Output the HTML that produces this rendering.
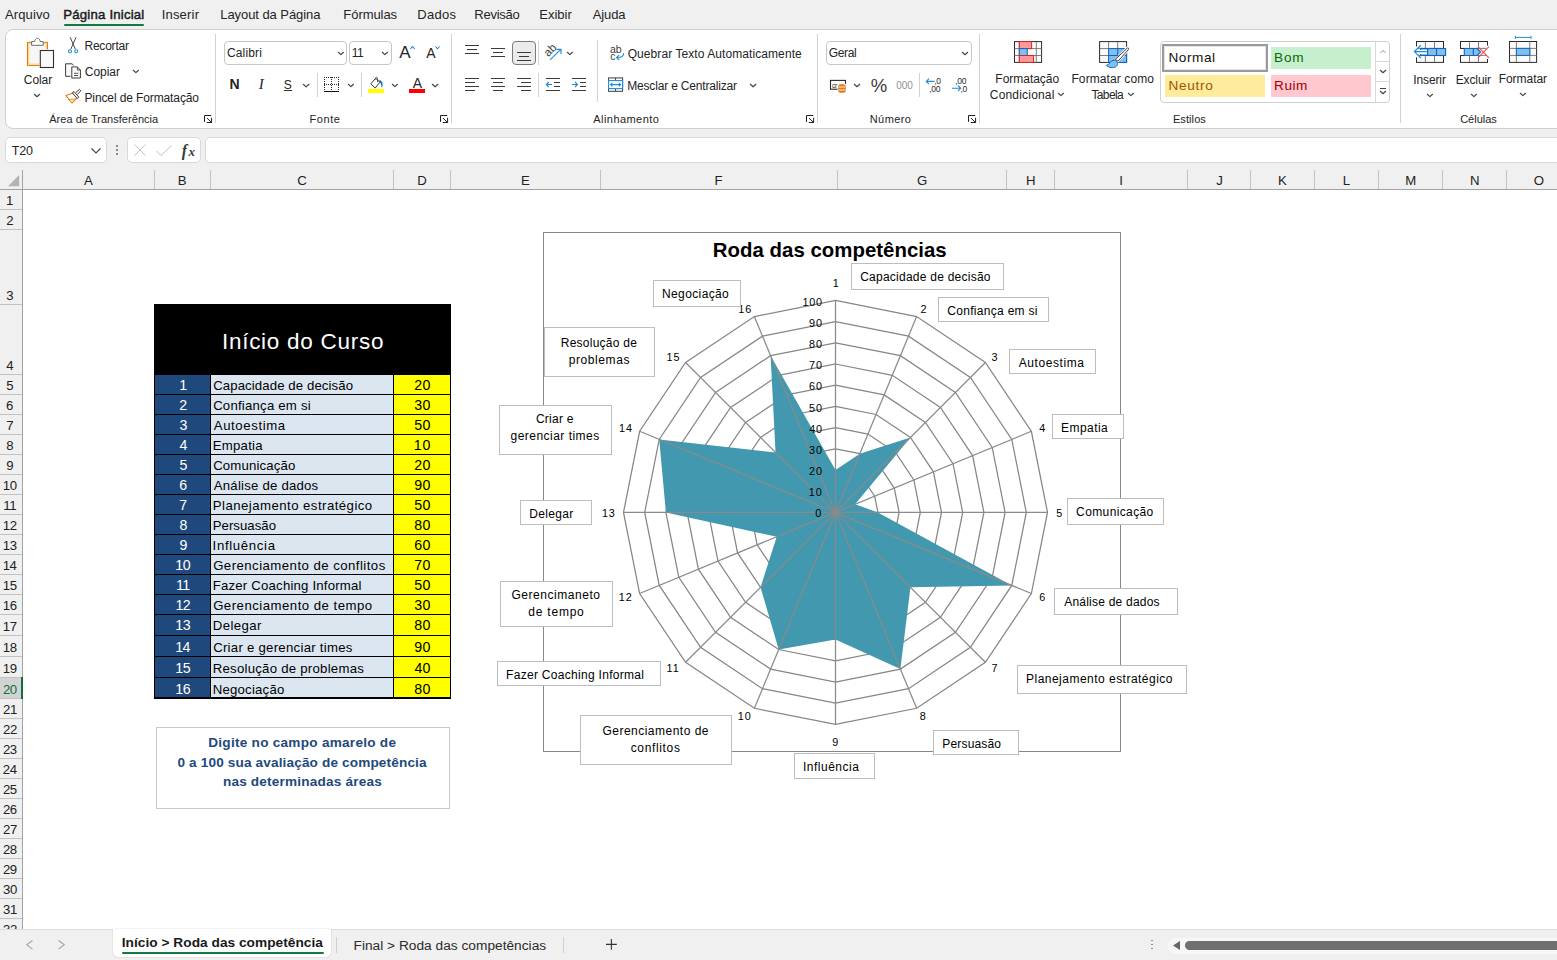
<!DOCTYPE html>
<html lang="pt-BR"><head><meta charset="utf-8"><title>Roda das competências</title>
<style>
html,body{margin:0;padding:0;}
body{width:1557px;height:960px;overflow:hidden;position:relative;background:#f0f0f0;font-family:"Liberation Sans",sans-serif;color:#242424;}
.b{position:absolute;display:block;}
.t{position:absolute;white-space:nowrap;display:block;}
svg{overflow:visible;}
</style></head><body>

<div id="tabs">
<span class="t" style="left:5.10px;top:6.00px;font-size:13px;line-height:17px;letter-spacing:0.092px;">Arquivo</span>
<span class="t" style="left:63.34px;top:6.00px;font-size:13.2px;line-height:17px;letter-spacing:0.190px;color:#1a1a1a;-webkit-text-stroke:0.45px #1a1a1a;">Página Inicial</span>
<div class="b" style="left:64.00px;top:24.00px;width:80.00px;height:2.00px;background:#107c41;border-radius:1px;"></div>
<span class="t" style="left:161.63px;top:6.00px;font-size:13px;line-height:17px;letter-spacing:0.210px;">Inserir</span>
<span class="t" style="left:220.26px;top:6.00px;font-size:13px;line-height:17px;letter-spacing:-0.064px;">Layout da Página</span>
<span class="t" style="left:343.36px;top:6.00px;font-size:13px;line-height:17px;letter-spacing:-0.069px;">Fórmulas</span>
<span class="t" style="left:417.36px;top:6.00px;font-size:13px;line-height:17px;letter-spacing:0.256px;">Dados</span>
<span class="t" style="left:474.36px;top:6.00px;font-size:13px;line-height:17px;letter-spacing:-0.250px;">Revisão</span>
<span class="t" style="left:539.26px;top:6.00px;font-size:13px;line-height:17px;letter-spacing:0.007px;">Exibir</span>
<span class="t" style="left:592.80px;top:6.00px;font-size:13px;line-height:17px;letter-spacing:-0.145px;">Ajuda</span>
</div>
<div class="b" style="left:5.00px;top:29.00px;width:1595.00px;height:100.00px;background:#ffffff;border:1px solid #d0d0d0;box-sizing:border-box;border-radius:8px;"></div>
<div class="b" style="left:215.00px;top:34.00px;width:1.00px;height:88.60px;background:#d2d2d2;"></div>
<div class="b" style="left:451.00px;top:34.00px;width:1.00px;height:88.60px;background:#d2d2d2;"></div>
<div class="b" style="left:817.00px;top:34.00px;width:1.00px;height:88.60px;background:#d2d2d2;"></div>
<div class="b" style="left:979.30px;top:34.00px;width:1.00px;height:88.60px;background:#d2d2d2;"></div>
<div class="b" style="left:1400.30px;top:34.00px;width:1.00px;height:88.60px;background:#d2d2d2;"></div>
<span class="t" style="left:23.80px;top:72.00px;font-size:12px;line-height:16px;letter-spacing:-0.075px;">Colar</span>
<svg class="b" style="left:34.00px;top:93.80px;" width="6.00" height="3.00" viewBox="0 0 6.00 3.00"><path d="M0.3 0.3 L3.00 2.70 L5.70 0.3" fill="none" stroke="#444" stroke-width="1.2" stroke-linecap="round" stroke-linejoin="round"/></svg>
<span class="t" style="left:84.44px;top:38.00px;font-size:12px;line-height:16px;letter-spacing:-0.211px;">Recortar</span>
<span class="t" style="left:84.80px;top:64.00px;font-size:12px;line-height:16px;letter-spacing:-0.032px;">Copiar</span>
<svg class="b" style="left:132.50px;top:70.05px;" width="5.80" height="2.90" viewBox="0 0 5.80 2.90"><path d="M0.3 0.3 L2.90 2.60 L5.50 0.3" fill="none" stroke="#444" stroke-width="1.2" stroke-linecap="round" stroke-linejoin="round"/></svg>
<span class="t" style="left:84.44px;top:90.00px;font-size:12px;line-height:16px;letter-spacing:-0.114px;">Pincel de Formatação</span>
<span class="t" style="left:49.20px;top:112.00px;font-size:11.0px;line-height:14px;letter-spacing:0.038px;">Área de Transferência</span>
<svg class="b" style="left:204.00px;top:115.00px;" width="8" height="8" viewBox="0 0 8 8"><path d="M0.5 6.5 V0.5 H6.8 M3.3 3.4 L7.5 7.4 M7.6 3.2 V7.5 H3.2" fill="none" stroke="#1f1f1f" stroke-width="1" stroke-linecap="round"/></svg>
<div class="b" style="left:224.00px;top:41.00px;width:122.50px;height:24.00px;background:#fff;border:1px solid #c6c6c6;box-sizing:border-box;border-radius:4px;"></div>
<span class="t" style="left:227.00px;top:45.00px;font-size:12px;line-height:16px;letter-spacing:0.132px;">Calibri</span>
<svg class="b" style="left:337.50px;top:52.05px;" width="5.80" height="2.90" viewBox="0 0 5.80 2.90"><path d="M0.3 0.3 L2.90 2.60 L5.50 0.3" fill="none" stroke="#444" stroke-width="1.2" stroke-linecap="round" stroke-linejoin="round"/></svg>
<div class="b" style="left:349.00px;top:41.00px;width:42.50px;height:24.00px;background:#fff;border:1px solid #c6c6c6;box-sizing:border-box;border-radius:4px;"></div>
<span class="t" style="left:351.70px;top:45.00px;font-size:12px;line-height:16px;letter-spacing:-0.580px;">11</span>
<svg class="b" style="left:382.20px;top:52.05px;" width="5.80" height="2.90" viewBox="0 0 5.80 2.90"><path d="M0.3 0.3 L2.90 2.60 L5.50 0.3" fill="none" stroke="#444" stroke-width="1.2" stroke-linecap="round" stroke-linejoin="round"/></svg>
<span class="t" style="left:399.20px;top:42.00px;font-size:17px;line-height:21px;">A</span>
<svg class="b" style="left:409.50px;top:45.50px;" width="5" height="3.2" viewBox="0 0 5 3.2"><path d="M0.4 2.8 L2.5 0.5 L4.6 2.8" fill="none" stroke="#2b7cd3" stroke-width="1.1"/></svg>
<span class="t" style="left:426.20px;top:44.00px;font-size:14px;line-height:18px;">A</span>
<svg class="b" style="left:435.20px;top:45.80px;" width="5" height="3.2" viewBox="0 0 5 3.2"><path d="M0.4 0.5 L2.5 2.8 L4.6 0.5" fill="none" stroke="#2b7cd3" stroke-width="1.1"/></svg>
<span class="t" style="left:229.49px;top:75.00px;font-size:14px;line-height:18px;font-weight:700;">N</span>
<span class="t" style="left:258.84px;top:75.00px;font-size:15px;line-height:19px;font-style:italic;font-family:'Liberation Serif',serif;">I</span>
<span class="t" style="left:283.86px;top:77.00px;font-size:12px;line-height:16px;">S</span>
<div class="b" style="left:284.00px;top:90.00px;width:8.00px;height:1.00px;background:#333;"></div>
<svg class="b" style="left:303.00px;top:84.02px;" width="6.30" height="3.15" viewBox="0 0 6.30 3.15"><path d="M0.3 0.3 L3.15 2.85 L6.00 0.3" fill="none" stroke="#444" stroke-width="1.2" stroke-linecap="round" stroke-linejoin="round"/></svg>
<div class="b" style="left:317.00px;top:73.00px;width:1.00px;height:23.60px;background:#d2d2d2;"></div>
<svg class="b" style="left:347.50px;top:84.15px;" width="5.80" height="2.90" viewBox="0 0 5.80 2.90"><path d="M0.3 0.3 L2.90 2.60 L5.50 0.3" fill="none" stroke="#444" stroke-width="1.2" stroke-linecap="round" stroke-linejoin="round"/></svg>
<div class="b" style="left:361.40px;top:73.00px;width:1.00px;height:23.60px;background:#d2d2d2;"></div>
<svg class="b" style="left:391.50px;top:84.15px;" width="5.80" height="2.90" viewBox="0 0 5.80 2.90"><path d="M0.3 0.3 L2.90 2.60 L5.50 0.3" fill="none" stroke="#444" stroke-width="1.2" stroke-linecap="round" stroke-linejoin="round"/></svg>
<span class="t" style="left:412.80px;top:74.00px;font-size:14px;line-height:18px;">A</span>
<div class="b" style="left:408.90px;top:89.00px;width:16.10px;height:4.00px;background:#ff0000;"></div>
<div class="b" style="left:368.00px;top:89.00px;width:16.00px;height:4.00px;background:#ffff00;"></div>
<svg class="b" style="left:432.30px;top:84.05px;" width="6.20" height="3.10" viewBox="0 0 6.20 3.10"><path d="M0.3 0.3 L3.10 2.80 L5.90 0.3" fill="none" stroke="#444" stroke-width="1.2" stroke-linecap="round" stroke-linejoin="round"/></svg>
<span class="t" style="left:309.62px;top:112.00px;font-size:11.0px;line-height:14px;letter-spacing:0.536px;">Fonte</span>
<svg class="b" style="left:440.00px;top:115.00px;" width="8" height="8" viewBox="0 0 8 8"><path d="M0.5 6.5 V0.5 H6.8 M3.3 3.4 L7.5 7.4 M7.6 3.2 V7.5 H3.2" fill="none" stroke="#1f1f1f" stroke-width="1" stroke-linecap="round"/></svg>
<div class="b" style="left:465.00px;top:44.90px;width:14.00px;height:1.00px;background:#3b3b3b;"></div><div class="b" style="left:467.00px;top:49.10px;width:10.00px;height:1.00px;background:#3b3b3b;"></div><div class="b" style="left:465.00px;top:53.10px;width:14.00px;height:1.00px;background:#3b3b3b;"></div>
<div class="b" style="left:490.80px;top:48.00px;width:14.00px;height:1.00px;background:#3b3b3b;"></div><div class="b" style="left:492.80px;top:52.20px;width:10.00px;height:1.00px;background:#3b3b3b;"></div><div class="b" style="left:490.80px;top:56.20px;width:14.00px;height:1.00px;background:#3b3b3b;"></div>
<div class="b" style="left:512.00px;top:41.00px;width:23.70px;height:23.70px;background:#ebebeb;border:1px solid #7a7a7a;box-sizing:border-box;border-radius:4px;"></div>
<div class="b" style="left:516.80px;top:51.80px;width:14.00px;height:1.00px;background:#3b3b3b;"></div><div class="b" style="left:518.80px;top:56.00px;width:10.00px;height:1.00px;background:#3b3b3b;"></div><div class="b" style="left:516.80px;top:60.00px;width:14.00px;height:1.00px;background:#3b3b3b;"></div>
<div class="b" style="left:538.30px;top:41.00px;width:1.00px;height:24.00px;background:#d2d2d2;"></div>
<svg class="b" style="left:566.80px;top:52.05px;" width="5.80" height="2.90" viewBox="0 0 5.80 2.90"><path d="M0.3 0.3 L2.90 2.60 L5.50 0.3" fill="none" stroke="#444" stroke-width="1.2" stroke-linecap="round" stroke-linejoin="round"/></svg>
<div class="b" style="left:597.00px;top:40.00px;width:1.00px;height:61.70px;background:#d2d2d2;"></div>
<div class="b" style="left:465.00px;top:78.00px;width:14.00px;height:1.00px;background:#3b3b3b;"></div><div class="b" style="left:465.00px;top:82.00px;width:10.00px;height:1.00px;background:#3b3b3b;"></div><div class="b" style="left:465.00px;top:86.10px;width:14.00px;height:1.00px;background:#3b3b3b;"></div><div class="b" style="left:465.00px;top:90.10px;width:10.00px;height:1.00px;background:#3b3b3b;"></div>
<div class="b" style="left:490.80px;top:78.00px;width:14.00px;height:1.00px;background:#3b3b3b;"></div><div class="b" style="left:492.80px;top:82.00px;width:10.00px;height:1.00px;background:#3b3b3b;"></div><div class="b" style="left:490.80px;top:86.10px;width:14.00px;height:1.00px;background:#3b3b3b;"></div><div class="b" style="left:492.80px;top:90.10px;width:10.00px;height:1.00px;background:#3b3b3b;"></div>
<div class="b" style="left:516.80px;top:78.00px;width:14.00px;height:1.00px;background:#3b3b3b;"></div><div class="b" style="left:520.80px;top:82.00px;width:10.00px;height:1.00px;background:#3b3b3b;"></div><div class="b" style="left:516.80px;top:86.10px;width:14.00px;height:1.00px;background:#3b3b3b;"></div><div class="b" style="left:520.80px;top:90.10px;width:10.00px;height:1.00px;background:#3b3b3b;"></div>
<div class="b" style="left:538.30px;top:73.00px;width:1.00px;height:23.60px;background:#d2d2d2;"></div>
<div class="b" style="left:546.00px;top:78.00px;width:14.00px;height:1.00px;background:#3b3b3b;"></div><div class="b" style="left:554.00px;top:82.00px;width:6.00px;height:1.00px;background:#3b3b3b;"></div><div class="b" style="left:554.00px;top:86.10px;width:6.00px;height:1.00px;background:#3b3b3b;"></div><div class="b" style="left:546.00px;top:90.10px;width:14.00px;height:1.00px;background:#3b3b3b;"></div>
<div class="b" style="left:572.00px;top:78.00px;width:14.00px;height:1.00px;background:#3b3b3b;"></div><div class="b" style="left:580.00px;top:82.00px;width:6.00px;height:1.00px;background:#3b3b3b;"></div><div class="b" style="left:580.00px;top:86.10px;width:6.00px;height:1.00px;background:#3b3b3b;"></div><div class="b" style="left:572.00px;top:90.10px;width:14.00px;height:1.00px;background:#3b3b3b;"></div>
<span class="t" style="left:627.66px;top:46.00px;font-size:12px;line-height:16px;letter-spacing:0.078px;">Quebrar Texto Automaticamente</span>
<span class="t" style="left:627.24px;top:78.00px;font-size:12px;line-height:16px;letter-spacing:-0.177px;">Mesclar e Centralizar</span>
<svg class="b" style="left:749.50px;top:84.05px;" width="6.20" height="3.10" viewBox="0 0 6.20 3.10"><path d="M0.3 0.3 L3.10 2.80 L5.90 0.3" fill="none" stroke="#444" stroke-width="1.2" stroke-linecap="round" stroke-linejoin="round"/></svg>
<span class="t" style="left:593.30px;top:112.00px;font-size:11.0px;line-height:14px;letter-spacing:0.441px;">Alinhamento</span>
<svg class="b" style="left:806.20px;top:115.00px;" width="8" height="8" viewBox="0 0 8 8"><path d="M0.5 6.5 V0.5 H6.8 M3.3 3.4 L7.5 7.4 M7.6 3.2 V7.5 H3.2" fill="none" stroke="#1f1f1f" stroke-width="1" stroke-linecap="round"/></svg>
<div class="b" style="left:826.00px;top:41.00px;width:145.70px;height:24.00px;background:#fff;border:1px solid #c6c6c6;box-sizing:border-box;border-radius:4px;"></div>
<span class="t" style="left:828.70px;top:45.00px;font-size:12px;line-height:16px;letter-spacing:-0.315px;">Geral</span>
<svg class="b" style="left:962.30px;top:52.00px;" width="6.00" height="3.00" viewBox="0 0 6.00 3.00"><path d="M0.3 0.3 L3.00 2.70 L5.70 0.3" fill="none" stroke="#444" stroke-width="1.2" stroke-linecap="round" stroke-linejoin="round"/></svg>
<svg class="b" style="left:853.60px;top:84.10px;" width="6.00" height="3.00" viewBox="0 0 6.00 3.00"><path d="M0.3 0.3 L3.00 2.70 L5.70 0.3" fill="none" stroke="#444" stroke-width="1.2" stroke-linecap="round" stroke-linejoin="round"/></svg>
<span class="t" style="left:870.65px;top:74.00px;font-size:18.5px;line-height:23px;color:#3b3b3b;">%</span>
<span class="t" style="left:896.23px;top:79.00px;font-size:10px;line-height:13px;letter-spacing:-0.013px;color:#8f8f8f;">000</span>
<div class="b" style="left:919.40px;top:73.00px;width:1.00px;height:23.60px;background:#d2d2d2;"></div>
<span class="t" style="left:869.72px;top:112.00px;font-size:11.0px;line-height:14px;letter-spacing:0.423px;">Número</span>
<svg class="b" style="left:968.00px;top:115.00px;" width="8" height="8" viewBox="0 0 8 8"><path d="M0.5 6.5 V0.5 H6.8 M3.3 3.4 L7.5 7.4 M7.6 3.2 V7.5 H3.2" fill="none" stroke="#1f1f1f" stroke-width="1" stroke-linecap="round"/></svg>
<span class="t" style="left:995.34px;top:71.00px;font-size:12px;line-height:16px;letter-spacing:-0.020px;">Formatação</span>
<span class="t" style="left:989.80px;top:87.00px;font-size:12px;line-height:16px;letter-spacing:0.188px;">Condicional</span>
<svg class="b" style="left:1057.80px;top:92.95px;" width="5.80" height="2.90" viewBox="0 0 5.80 2.90"><path d="M0.3 0.3 L2.90 2.60 L5.50 0.3" fill="none" stroke="#444" stroke-width="1.2" stroke-linecap="round" stroke-linejoin="round"/></svg>
<span class="t" style="left:1071.44px;top:71.00px;font-size:12px;line-height:16px;letter-spacing:0.101px;">Formatar como</span>
<span class="t" style="left:1091.46px;top:87.00px;font-size:12px;line-height:16px;letter-spacing:-0.626px;">Tabela</span>
<svg class="b" style="left:1127.60px;top:92.95px;" width="5.80" height="2.90" viewBox="0 0 5.80 2.90"><path d="M0.3 0.3 L2.90 2.60 L5.50 0.3" fill="none" stroke="#444" stroke-width="1.2" stroke-linecap="round" stroke-linejoin="round"/></svg>
<div class="b" style="left:1160.00px;top:41.00px;width:230.00px;height:62.00px;background:#fff;border:1px solid #cfcfcf;box-sizing:border-box;border-radius:4px;"></div>
<div class="b" style="left:1375.00px;top:41.80px;width:1.00px;height:60.20px;background:#d9d9d9;"></div>
<div class="b" style="left:1375.50px;top:61.20px;width:13.80px;height:1.00px;background:#d9d9d9;"></div>
<div class="b" style="left:1375.50px;top:80.70px;width:13.80px;height:1.00px;background:#d9d9d9;"></div>
<svg class="b" style="left:1379.70px;top:50.00px;" width="6" height="3.2" viewBox="0 0 6 3.2"><path d="M0.4 2.8 L3 0.5 L5.6 2.8" fill="none" stroke="#b5b5b5" stroke-width="1.1"/></svg>
<svg class="b" style="left:1379.70px;top:69.80px;" width="6.00" height="3.00" viewBox="0 0 6.00 3.00"><path d="M0.3 0.3 L3.00 2.70 L5.70 0.3" fill="none" stroke="#444" stroke-width="1.2" stroke-linecap="round" stroke-linejoin="round"/></svg>
<div class="b" style="left:1379.50px;top:87.70px;width:6.50px;height:1.00px;background:#444;"></div>
<svg class="b" style="left:1379.70px;top:90.80px;" width="6.00" height="3.00" viewBox="0 0 6.00 3.00"><path d="M0.3 0.3 L3.00 2.70 L5.70 0.3" fill="none" stroke="#444" stroke-width="1.2" stroke-linecap="round" stroke-linejoin="round"/></svg>
<div class="b" style="left:1162.00px;top:44.20px;width:106.00px;height:27.40px;background:#fff;border:2px solid #9a9a9a;box-sizing:border-box;box-shadow:inset 0 0 0 1px #e4e4e4;"></div>
<span class="t" style="left:1168.51px;top:49.00px;font-size:13.6px;line-height:17px;letter-spacing:0.549px;color:#111;">Normal</span>
<div class="b" style="left:1270.90px;top:47.00px;width:100.10px;height:22.00px;background:#c6efce;"></div>
<span class="t" style="left:1274.11px;top:49.00px;font-size:13.6px;line-height:17px;letter-spacing:0.712px;color:#0a6a0a;">Bom</span>
<div class="b" style="left:1165.00px;top:75.00px;width:100.00px;height:21.80px;background:#ffeb9c;"></div>
<span class="t" style="left:1168.51px;top:77.00px;font-size:13.6px;line-height:17px;letter-spacing:0.726px;color:#9c5700;">Neutro</span>
<div class="b" style="left:1270.90px;top:75.00px;width:100.10px;height:21.80px;background:#ffc7ce;"></div>
<span class="t" style="left:1274.11px;top:77.00px;font-size:13.6px;line-height:17px;letter-spacing:0.483px;color:#9c0006;">Ruim</span>
<span class="t" style="left:1172.92px;top:112.00px;font-size:11.0px;line-height:14px;letter-spacing:0.095px;">Estilos</span>
<span class="t" style="left:1413.32px;top:72.00px;font-size:12px;line-height:16px;letter-spacing:-0.128px;">Inserir</span>
<svg class="b" style="left:1426.80px;top:94.05px;" width="5.80" height="2.90" viewBox="0 0 5.80 2.90"><path d="M0.3 0.3 L2.90 2.60 L5.50 0.3" fill="none" stroke="#444" stroke-width="1.2" stroke-linecap="round" stroke-linejoin="round"/></svg>
<span class="t" style="left:1455.74px;top:72.00px;font-size:12px;line-height:16px;letter-spacing:-0.127px;">Excluir</span>
<svg class="b" style="left:1470.60px;top:94.05px;" width="5.80" height="2.90" viewBox="0 0 5.80 2.90"><path d="M0.3 0.3 L2.90 2.60 L5.50 0.3" fill="none" stroke="#444" stroke-width="1.2" stroke-linecap="round" stroke-linejoin="round"/></svg>
<span class="t" style="left:1498.64px;top:71.00px;font-size:12px;line-height:16px;letter-spacing:-0.031px;">Formatar</span>
<svg class="b" style="left:1519.60px;top:93.05px;" width="5.80" height="2.90" viewBox="0 0 5.80 2.90"><path d="M0.3 0.3 L2.90 2.60 L5.50 0.3" fill="none" stroke="#444" stroke-width="1.2" stroke-linecap="round" stroke-linejoin="round"/></svg>
<span class="t" style="left:1460.15px;top:112.00px;font-size:11.0px;line-height:14px;letter-spacing:0.008px;">Células</span>
<svg class="b" style="left:0;top:0;font-family:'Liberation Sans',sans-serif;" width="1557" height="170" viewBox="0 0 1557 170"><rect x="27.5" y="42.4" width="20" height="23" fill="#f6f6f6" stroke="#e07a12" stroke-width="1.1"/>
<rect x="28.7" y="43.6" width="17.6" height="20.6" fill="none" stroke="#fbdc8e" stroke-width="1.4"/>
<path d="M31.6 45.3 V41.6 H34.6 C34.9 37.2 39.9 37.2 40.2 41.6 H43.2 V45.3 Z" fill="#fff" stroke="#6e6e6e" stroke-width="1"/>
<rect x="39.3" y="49.3" width="15.6" height="19.6" fill="#fff" stroke="none"/>
<rect x="40.3" y="50.5" width="13.2" height="17" fill="#fafafa" stroke="#2f2f2f" stroke-width="1.1"/>
<path d="M70.2 37.3 L75.4 49.2 M76 37.3 L70.8 49.2" fill="none" stroke="#3b3b3b" stroke-width="0.95"/>
<circle cx="70" cy="51.2" r="1.5" fill="none" stroke="#1e8bdb" stroke-width="1.1"/><circle cx="76.2" cy="51.2" r="1.5" fill="none" stroke="#1e8bdb" stroke-width="1.1"/>
<path d="M70.5 76.3 H65.6 V63.8 H72 L73.5 65.2" fill="#fafafa" stroke="#3b3b3b" stroke-width="1"/>
<path d="M71.8 66.9 H77.3 L80.4 70 V78 H71.8 Z" fill="#fff" stroke="#3b3b3b" stroke-width="1"/>
<path d="M77.3 66.9 V70 H80.4 M74 73.3 H78.3 M74 75.5 H78.3" fill="none" stroke="#3b3b3b" stroke-width="0.9"/>
<path d="M72.6 93.2 L65.9 95.6 L72 103 L77.6 97.4 Z" fill="#fff" stroke="#e07a12" stroke-width="1.1" stroke-linejoin="round"/>
<path d="M68.5 99.5 L72 103 L76 99 Z" fill="#fde39a" stroke="#e07a12" stroke-width="0.8"/>
<path d="M72.2 92.6 L74 91.5 L78.8 97.2 L77.2 98.6 Z" fill="#fff" stroke="#3b3b3b" stroke-width="1"/>
<path d="M75.6 92.8 L79.4 89.4 L80.8 90.8 L77.2 94.6" fill="#fff" stroke="#3b3b3b" stroke-width="1"/>
<g shape-rendering="crispEdges" stroke="#2b2b2b" stroke-width="1" stroke-dasharray="1 1" fill="none"><path d="M324 77.5 H339 M324 84.5 H339 M324.5 77 V90 M338.5 77 V90 M331.5 77 V90"/></g>
<rect x="324" y="91" width="15" height="1" fill="#111" shape-rendering="crispEdges"/>
<path d="M375.6 78.3 L370.8 83.9 L375.2 88 L380 82.2 Z" fill="#fff" stroke="#3b3b3b" stroke-width="1" stroke-linejoin="round"/>
<path d="M375.3 79.6 C375.6 76.6 377.8 76.8 377.6 79.2 V82.2" fill="none" stroke="#3b3b3b" stroke-width="0.9"/>
<path d="M379.6 80.6 C381.8 80.6 383 84 381.8 87 C381.8 84.5 381 82.6 379.6 81.8 Z" fill="#1066bd" stroke="#1066bd" stroke-width="0.6"/>
<text x="0" y="0" transform="translate(548.3,57.2) rotate(-45)" style="font-size:11.5px" fill="#3b3b3b">ab</text>
<path d="M550 59.9 L560.6 49.7 M556.4 49.4 H561 V54" fill="none" stroke="#1e8bdb" stroke-width="1.1"/>
<path d="M546.3 84.5 H552 M548.8 82 L546.3 84.5 L548.8 87" fill="none" stroke="#1e8bdb" stroke-width="1.1"/>
<path d="M572 84.5 H577.5 M575 82 L577.5 84.5 L575 87" fill="none" stroke="#1e8bdb" stroke-width="1.1"/>
<text x="610" y="52.8" style="font-size:10.5px;letter-spacing:-0.2px" fill="#3b3b3b">ab</text><text x="610.2" y="59.8" style="font-size:10.5px" fill="#3b3b3b">c</text>
<path d="M623.5 53.2 C624.2 56.3 621.5 57.6 616.6 57.5 M619.2 55.2 L616.5 57.5 L619.2 60" fill="none" stroke="#1e8bdb" stroke-width="1.1"/>
<rect x="608.6" y="77.9" width="14" height="13.4" fill="#fff" stroke="#3b3b3b" stroke-width="1"/><path d="M615.6 78 V91" stroke="#3b3b3b" stroke-width="1"/>
<rect x="608.6" y="80.6" width="14" height="8" fill="#fff" stroke="#1e8bdb" stroke-width="1.1"/>
<path d="M610.6 84.6 H620.6 M612.4 82.8 L610.6 84.6 L612.4 86.4 M618.8 82.8 L620.6 84.6 L618.8 86.4" fill="none" stroke="#1e8bdb" stroke-width="1.1"/>
<rect x="830.5" y="80.4" width="15" height="8.8" fill="#fff" stroke="#2b2b2b" stroke-width="1.1"/>
<text x="832" y="87.6" style="font-size:7px;letter-spacing:-0.4px" fill="#2b2b2b">cr</text>
<rect x="837.6" y="83.6" width="8.8" height="9.6" rx="2" fill="#fff"/>
<rect x="838.2" y="84.2" width="7.6" height="8.6" rx="2.2" fill="#e07a12"/><path d="M838.6 87 H845.4 M838.6 90 H845.4" stroke="#fff" stroke-width="0.9"/>
<path d="M926.3 81.4 H934.6 M929 78.6 L926.3 81.4 L929 84.2" fill="none" stroke="#1e8bdb" stroke-width="1.1"/>
<text x="934.2" y="83.6" style="font-size:8.5px;letter-spacing:-0.3px" fill="#2b2b2b">,0</text><text x="929.2" y="91.8" style="font-size:8.5px;letter-spacing:-0.3px" fill="#2b2b2b">,00</text>
<text x="955.2" y="83.6" style="font-size:8.5px;letter-spacing:-0.3px" fill="#2b2b2b">,00</text><text x="960.4" y="91.8" style="font-size:8.5px;letter-spacing:-0.3px" fill="#2b2b2b">,0</text>
<path d="M952 88.3 H960.6 M958 85.5 L960.7 88.3 L958 91.1" fill="none" stroke="#1e8bdb" stroke-width="1.1"/>
<rect x="1014.5" y="41.6" width="27.1" height="20.8" fill="#fcfcfc" stroke="#2b2b2b" stroke-width="1"/><path d="M1019.3 41.6 V62.4 M1036.3 41.6 V62.4 M1014.5 48.6 H1041.6 M1014.5 55.5 H1041.6 " fill="none" stroke="#6f6f6f" stroke-width="0.9"/>
<rect x="1019.3" y="41.6" width="12.3" height="7" fill="#ff9a9e" stroke="#e0231a" stroke-width="1"/>
<rect x="1019.3" y="48.6" width="8" height="6.9" fill="#83beec" stroke="#1066bd" stroke-width="1"/>
<rect x="1019.3" y="55.5" width="14.3" height="6.9" fill="#ff9a9e" stroke="#e0231a" stroke-width="1"/>
<rect x="1099.6" y="41.6" width="27.0" height="20.8" fill="#fcfcfc" stroke="#2b2b2b" stroke-width="1"/><path d="M1108.6 41.6 V62.4 M1117.7 41.6 V62.4 M1099.6 48.6 H1126.6 M1099.6 55.5 H1126.6 " fill="none" stroke="#6f6f6f" stroke-width="0.9"/>
<rect x="1108.6" y="48.6" width="18" height="13.8" fill="#83beec" stroke="#1066bd" stroke-width="1"/><path d="M1117.7 48.6 V62.4 M1108.6 55.5 H1126.6" stroke="#1066bd" stroke-width="1"/>
<path d="M1128.2 48.4 L1116.6 60.8" stroke="#fff" stroke-width="4.6" stroke-linecap="round"/>
<path d="M1127.4 48 C1128.6 47.6 1129 48.6 1128.4 49.6 L1118 61.2 L1115.4 59.4 Z" fill="#fff" stroke="#2b2b2b" stroke-width="0.9" stroke-linejoin="round"/>
<path d="M1106.4 65.4 C1110 65 1109.6 60.2 1114 60.2 C1117.6 60.4 1118.8 64.4 1116 66.6 C1113 68.6 1108.6 67.6 1106.4 65.4 Z" fill="#83beec" stroke="#1066bd" stroke-width="1"/>
<rect x="1416.5" y="41.5" width="27.0" height="20.9" fill="#fcfcfc" stroke="#2b2b2b" stroke-width="1"/><path d="M1425.4 41.5 V62.4 M1434.5 41.5 V62.4 M1416.5 48.4 H1443.5 M1416.5 55.4 H1443.5 " fill="none" stroke="#6f6f6f" stroke-width="0.9"/>
<rect x="1415" y="46.4" width="3" height="11" fill="#fff"/>
<rect x="1420.6" y="48.5" width="25" height="7" fill="#83beec" stroke="#1066bd" stroke-width="1.1"/><path d="M1427.6 48.5 V55.5 M1436.5 48.5 V55.5" stroke="#1066bd" stroke-width="1.1"/>
<path d="M1427 50 H1418.6 L1417 52 L1418.6 54 H1427 Z" fill="#fff"/><path d="M1426.8 51.6 H1414.6 M1420.9 45.2 L1414.4 51.6 L1420.9 58" fill="none" stroke="#1e8bdb" stroke-width="1.2"/>
<rect x="1460.5" y="41.5" width="27.0" height="20.9" fill="#fcfcfc" stroke="#2b2b2b" stroke-width="1"/><path d="M1469.5 41.5 V62.4 M1478.5 41.5 V62.4 M1460.5 48.4 H1487.5 M1460.5 55.4 H1487.5 " fill="none" stroke="#6f6f6f" stroke-width="0.9"/>
<rect x="1459.5" y="49" width="29.5" height="5.9" fill="#fff"/><rect x="1486" y="45.6" width="3" height="13.4" fill="#fff"/>
<path d="M1460.5 48.5 H1464 M1460.5 55.5 H1464" stroke="#2b2b2b" stroke-width="1"/>
<path d="M1464.3 48.5 H1477 L1480.6 52 L1477 55.5 H1464.3 Z" fill="#83beec" stroke="#1066bd" stroke-width="1.1" stroke-linejoin="round"/><path d="M1473.3 48.5 V55.5" stroke="#1066bd" stroke-width="1.1"/>
<path d="M1477.9 46.6 L1489 57.9 M1489 46.6 L1477.9 57.9" stroke="#f04a4a" stroke-width="1.15"/>
<rect x="1509.5" y="41.5" width="27.1" height="20.9" fill="#fcfcfc" stroke="#2b2b2b" stroke-width="1"/><path d="M1516.4 41.5 V62.4 M1529.8 41.5 V62.4 M1509.5 48.4 H1536.6 M1509.5 55.4 H1536.6 " fill="none" stroke="#6f6f6f" stroke-width="0.9"/>
<rect x="1516.4" y="48.4" width="13.4" height="7" fill="#83beec" stroke="#1066bd" stroke-width="1"/>
<path d="M1515.4 37.4 H1531 M1515.4 35.9 V38.9 M1531 35.9 V38.9" stroke="#1e8bdb" stroke-width="1"/></svg>
<div class="b" style="left:5.00px;top:137.00px;width:102.00px;height:26.00px;background:#fff;border:1px solid #d9d9d9;box-sizing:border-box;border-radius:5px;"></div>
<span class="t" style="left:11.75px;top:143.00px;font-size:12.5px;line-height:16px;letter-spacing:-0.156px;">T20</span>
<svg class="b" style="left:91.00px;top:147.60px;" width="10" height="6" viewBox="0 0 10 6"><path d="M0.5 0.5 L5 5 L9.5 0.5" fill="none" stroke="#444" stroke-width="1.1"/></svg>
<div class="b" style="left:116.30px;top:145.30px;width:1.40px;height:1.40px;background:#8a8a8a;"></div>
<div class="b" style="left:116.30px;top:149.30px;width:1.40px;height:1.40px;background:#8a8a8a;"></div>
<div class="b" style="left:116.30px;top:153.30px;width:1.40px;height:1.40px;background:#8a8a8a;"></div>
<div class="b" style="left:127.00px;top:137.00px;width:74.00px;height:26.00px;background:#fff;border:1px solid #d9d9d9;box-sizing:border-box;border-radius:5px;"></div>
<svg class="b" style="left:134.00px;top:144.00px;" width="12" height="12" viewBox="0 0 12 12"><path d="M0.5 0.5 L11.5 11.5 M11.5 0.5 L0.5 11.5" fill="none" stroke="#c2c2c2" stroke-width="1"/></svg>
<svg class="b" style="left:156.00px;top:144.50px;" width="16" height="11" viewBox="0 0 16 11"><path d="M0.5 6 L5 10.5 L15.5 0.5" fill="none" stroke="#c2c2c2" stroke-width="1"/></svg>
<span class="t" style="left:181.74px;top:141.00px;font-size:16px;line-height:19px;font-weight:700;font-style:italic;color:#3a3a3a;font-family:'Liberation Serif',serif;">f</span>
<span class="t" style="left:188.39px;top:143.00px;font-size:13px;line-height:17px;font-weight:700;font-style:italic;color:#3a3a3a;font-family:'Liberation Serif',serif;">x</span>
<div class="b" style="left:205.00px;top:137.00px;width:1395.00px;height:26.00px;background:#fff;border:1px solid #d9d9d9;box-sizing:border-box;border-radius:5px;"></div>
<div class="b" style="left:0.00px;top:170.00px;width:1557.00px;height:759.00px;background:#ffffff;"></div>
<div class="b" style="left:0.00px;top:170.00px;width:1557.00px;height:19.00px;background:#f0f0f0;"></div>
<div class="b" style="left:0.00px;top:189.00px;width:1557.00px;height:1.00px;background:#a3a3a3;"></div>
<div class="b" style="left:153.80px;top:170.00px;width:1.00px;height:19.00px;background:#c2c2c2;"></div>
<span class="t" style="left:83.89px;top:172.00px;font-size:13.2px;line-height:17px;color:#222;">A</span>
<div class="b" style="left:209.90px;top:170.00px;width:1.00px;height:19.00px;background:#c2c2c2;"></div>
<span class="t" style="left:177.87px;top:172.00px;font-size:13.2px;line-height:17px;color:#222;">B</span>
<div class="b" style="left:393.10px;top:170.00px;width:1.00px;height:19.00px;background:#c2c2c2;"></div>
<span class="t" style="left:297.27px;top:172.00px;font-size:13.2px;line-height:17px;color:#222;">C</span>
<div class="b" style="left:450.00px;top:170.00px;width:1.00px;height:19.00px;background:#c2c2c2;"></div>
<span class="t" style="left:417.18px;top:172.00px;font-size:13.2px;line-height:17px;color:#222;">D</span>
<div class="b" style="left:599.90px;top:170.00px;width:1.00px;height:19.00px;background:#c2c2c2;"></div>
<span class="t" style="left:520.90px;top:172.00px;font-size:13.2px;line-height:17px;color:#222;">E</span>
<div class="b" style="left:836.50px;top:170.00px;width:1.00px;height:19.00px;background:#c2c2c2;"></div>
<span class="t" style="left:714.49px;top:172.00px;font-size:13.2px;line-height:17px;color:#222;">F</span>
<div class="b" style="left:1006.20px;top:170.00px;width:1.00px;height:19.00px;background:#c2c2c2;"></div>
<span class="t" style="left:917.00px;top:172.00px;font-size:13.2px;line-height:17px;color:#222;">G</span>
<div class="b" style="left:1054.00px;top:170.00px;width:1.00px;height:19.00px;background:#c2c2c2;"></div>
<span class="t" style="left:1025.94px;top:172.00px;font-size:13.2px;line-height:17px;color:#222;">H</span>
<div class="b" style="left:1187.10px;top:170.00px;width:1.00px;height:19.00px;background:#c2c2c2;"></div>
<span class="t" style="left:1119.24px;top:172.00px;font-size:13.2px;line-height:17px;color:#222;">I</span>
<div class="b" style="left:1250.10px;top:170.00px;width:1.00px;height:19.00px;background:#c2c2c2;"></div>
<span class="t" style="left:1216.26px;top:172.00px;font-size:13.2px;line-height:17px;color:#222;">J</span>
<div class="b" style="left:1314.20px;top:170.00px;width:1.00px;height:19.00px;background:#c2c2c2;"></div>
<span class="t" style="left:1277.90px;top:172.00px;font-size:13.2px;line-height:17px;color:#222;">K</span>
<div class="b" style="left:1378.30px;top:170.00px;width:1.00px;height:19.00px;background:#c2c2c2;"></div>
<span class="t" style="left:1342.85px;top:172.00px;font-size:13.2px;line-height:17px;color:#222;">L</span>
<div class="b" style="left:1442.10px;top:170.00px;width:1.00px;height:19.00px;background:#c2c2c2;"></div>
<span class="t" style="left:1405.34px;top:172.00px;font-size:13.2px;line-height:17px;color:#222;">M</span>
<div class="b" style="left:1506.20px;top:170.00px;width:1.00px;height:19.00px;background:#c2c2c2;"></div>
<span class="t" style="left:1469.99px;top:172.00px;font-size:13.2px;line-height:17px;color:#222;">N</span>
<div class="b" style="left:1570.50px;top:170.00px;width:1.00px;height:19.00px;background:#c2c2c2;"></div>
<span class="t" style="left:1533.87px;top:172.00px;font-size:13.2px;line-height:17px;color:#222;">O</span>
<svg class="b" style="left:7.70px;top:174.50px;" width="11.2" height="11.2" viewBox="0 0 11.2 11.2"><path d="M11.2 0 V11.2 H0 Z" fill="#b3b3b3"/></svg>
<div class="b" style="left:0.00px;top:190.00px;width:22.00px;height:739.00px;background:#f0f0f0;"></div>
<div class="b" style="left:22.00px;top:170.00px;width:1.00px;height:759.00px;background:#a3a3a3;"></div>
<div class="b" style="left:0.00px;top:209.00px;width:22.00px;height:1.00px;background:#c2c2c2;"></div>
<span class="t" style="left:5.96px;top:192.00px;font-size:13.2px;line-height:17px;color:#222;">1</span>
<div class="b" style="left:0.00px;top:229.00px;width:22.00px;height:1.00px;background:#c2c2c2;"></div>
<span class="t" style="left:6.13px;top:212.00px;font-size:13.2px;line-height:17px;color:#222;">2</span>
<div class="b" style="left:0.00px;top:304.00px;width:22.00px;height:1.00px;background:#c2c2c2;"></div>
<span class="t" style="left:6.19px;top:287.00px;font-size:13.2px;line-height:17px;color:#222;">3</span>
<div class="b" style="left:0.00px;top:374.00px;width:22.00px;height:1.00px;background:#c2c2c2;"></div>
<span class="t" style="left:6.20px;top:357.00px;font-size:13.2px;line-height:17px;color:#222;">4</span>
<div class="b" style="left:0.00px;top:394.00px;width:22.00px;height:1.00px;background:#c2c2c2;"></div>
<span class="t" style="left:6.16px;top:377.00px;font-size:13.2px;line-height:17px;color:#222;">5</span>
<div class="b" style="left:0.00px;top:414.00px;width:22.00px;height:1.00px;background:#c2c2c2;"></div>
<span class="t" style="left:6.10px;top:397.00px;font-size:13.2px;line-height:17px;color:#222;">6</span>
<div class="b" style="left:0.00px;top:434.00px;width:22.00px;height:1.00px;background:#c2c2c2;"></div>
<span class="t" style="left:6.13px;top:417.00px;font-size:13.2px;line-height:17px;color:#222;">7</span>
<div class="b" style="left:0.00px;top:454.00px;width:22.00px;height:1.00px;background:#c2c2c2;"></div>
<span class="t" style="left:6.14px;top:437.00px;font-size:13.2px;line-height:17px;color:#222;">8</span>
<div class="b" style="left:0.00px;top:474.00px;width:22.00px;height:1.00px;background:#c2c2c2;"></div>
<span class="t" style="left:6.15px;top:457.00px;font-size:13.2px;line-height:17px;color:#222;">9</span>
<div class="b" style="left:0.00px;top:494.00px;width:22.00px;height:1.00px;background:#c2c2c2;"></div>
<span class="t" style="left:2.72px;top:477.00px;font-size:13.2px;line-height:17px;letter-spacing:-0.395px;color:#222;">10</span>
<div class="b" style="left:0.00px;top:514.00px;width:22.00px;height:1.00px;background:#c2c2c2;"></div>
<span class="t" style="left:3.25px;top:497.00px;font-size:13.2px;line-height:17px;letter-spacing:-0.362px;color:#222;">11</span>
<div class="b" style="left:0.00px;top:534.00px;width:22.00px;height:1.00px;background:#c2c2c2;"></div>
<span class="t" style="left:2.79px;top:517.00px;font-size:13.2px;line-height:17px;letter-spacing:-0.391px;color:#222;">12</span>
<div class="b" style="left:0.00px;top:554.00px;width:22.00px;height:1.00px;background:#c2c2c2;"></div>
<span class="t" style="left:2.76px;top:537.00px;font-size:13.2px;line-height:17px;letter-spacing:-0.393px;color:#222;">13</span>
<div class="b" style="left:0.00px;top:574.00px;width:22.00px;height:1.00px;background:#c2c2c2;"></div>
<span class="t" style="left:2.66px;top:557.00px;font-size:13.2px;line-height:17px;letter-spacing:-0.399px;color:#222;">14</span>
<div class="b" style="left:0.00px;top:594.00px;width:22.00px;height:1.00px;background:#c2c2c2;"></div>
<span class="t" style="left:2.74px;top:577.00px;font-size:13.2px;line-height:17px;letter-spacing:-0.394px;color:#222;">15</span>
<div class="b" style="left:0.00px;top:614.00px;width:22.00px;height:1.00px;background:#c2c2c2;"></div>
<span class="t" style="left:2.76px;top:597.00px;font-size:13.2px;line-height:17px;letter-spacing:-0.393px;color:#222;">16</span>
<div class="b" style="left:0.00px;top:635.00px;width:22.00px;height:1.00px;background:#c2c2c2;"></div>
<span class="t" style="left:2.79px;top:618.00px;font-size:13.2px;line-height:17px;letter-spacing:-0.391px;color:#222;">17</span>
<div class="b" style="left:0.00px;top:656.00px;width:22.00px;height:1.00px;background:#c2c2c2;"></div>
<span class="t" style="left:2.74px;top:639.00px;font-size:13.2px;line-height:17px;letter-spacing:-0.394px;color:#222;">18</span>
<div class="b" style="left:0.00px;top:677.00px;width:22.00px;height:1.00px;background:#c2c2c2;"></div>
<span class="t" style="left:2.77px;top:660.00px;font-size:13.2px;line-height:17px;letter-spacing:-0.392px;color:#222;">19</span>
<div class="b" style="left:0.00px;top:678.00px;width:21.00px;height:20.00px;background:#d3d3d3;"></div>
<div class="b" style="left:0.00px;top:698.00px;width:22.00px;height:1.00px;background:#c2c2c2;"></div>
<div class="b" style="left:21.00px;top:677.00px;width:2.00px;height:22.00px;background:#0f703b;"></div>
<span class="t" style="left:2.89px;top:681.00px;font-size:13.2px;line-height:17px;letter-spacing:-0.405px;color:#0f703b;">20</span>
<div class="b" style="left:0.00px;top:718.00px;width:22.00px;height:1.00px;background:#c2c2c2;"></div>
<span class="t" style="left:2.96px;top:701.00px;font-size:13.2px;line-height:17px;letter-spacing:-0.401px;color:#222;">21</span>
<div class="b" style="left:0.00px;top:738.00px;width:22.00px;height:1.00px;background:#c2c2c2;"></div>
<span class="t" style="left:2.96px;top:721.00px;font-size:13.2px;line-height:17px;letter-spacing:-0.401px;color:#222;">22</span>
<div class="b" style="left:0.00px;top:758.00px;width:22.00px;height:1.00px;background:#c2c2c2;"></div>
<span class="t" style="left:2.93px;top:741.00px;font-size:13.2px;line-height:17px;letter-spacing:-0.403px;color:#222;">23</span>
<div class="b" style="left:0.00px;top:778.00px;width:22.00px;height:1.00px;background:#c2c2c2;"></div>
<span class="t" style="left:2.83px;top:761.00px;font-size:13.2px;line-height:17px;letter-spacing:-0.409px;color:#222;">24</span>
<div class="b" style="left:0.00px;top:798.00px;width:22.00px;height:1.00px;background:#c2c2c2;"></div>
<span class="t" style="left:2.91px;top:781.00px;font-size:13.2px;line-height:17px;letter-spacing:-0.404px;color:#222;">25</span>
<div class="b" style="left:0.00px;top:818.00px;width:22.00px;height:1.00px;background:#c2c2c2;"></div>
<span class="t" style="left:2.93px;top:801.00px;font-size:13.2px;line-height:17px;letter-spacing:-0.403px;color:#222;">26</span>
<div class="b" style="left:0.00px;top:838.00px;width:22.00px;height:1.00px;background:#c2c2c2;"></div>
<span class="t" style="left:2.96px;top:821.00px;font-size:13.2px;line-height:17px;letter-spacing:-0.401px;color:#222;">27</span>
<div class="b" style="left:0.00px;top:858.00px;width:22.00px;height:1.00px;background:#c2c2c2;"></div>
<span class="t" style="left:2.91px;top:841.00px;font-size:13.2px;line-height:17px;letter-spacing:-0.404px;color:#222;">28</span>
<div class="b" style="left:0.00px;top:878.00px;width:22.00px;height:1.00px;background:#c2c2c2;"></div>
<span class="t" style="left:2.94px;top:861.00px;font-size:13.2px;line-height:17px;letter-spacing:-0.402px;color:#222;">29</span>
<div class="b" style="left:0.00px;top:898.00px;width:22.00px;height:1.00px;background:#c2c2c2;"></div>
<span class="t" style="left:2.98px;top:881.00px;font-size:13.2px;line-height:17px;letter-spacing:-0.410px;color:#222;">30</span>
<div class="b" style="left:0.00px;top:918.00px;width:22.00px;height:1.00px;background:#c2c2c2;"></div>
<span class="t" style="left:3.04px;top:901.00px;font-size:13.2px;line-height:17px;letter-spacing:-0.406px;color:#222;">31</span>
<div class="b" style="left:0.00px;top:938.00px;width:22.00px;height:1.00px;background:#c2c2c2;"></div>
<span class="t" style="left:3.04px;top:921.00px;font-size:13.2px;line-height:17px;letter-spacing:-0.406px;color:#222;">32</span>
<div class="b" style="left:154.00px;top:304.00px;width:297.00px;height:395.00px;background:#000;"></div>
<span class="t" style="left:221.97px;top:328.00px;font-size:22.5px;line-height:27px;letter-spacing:0.722px;color:#fff;">Início do Curso</span>
<div class="b" style="left:155.00px;top:375.00px;width:55.00px;height:19.00px;background:#1f497d;"></div>
<div class="b" style="left:211.00px;top:375.00px;width:182.00px;height:19.00px;background:#dce6f1;"></div>
<div class="b" style="left:394.00px;top:375.00px;width:56.00px;height:19.00px;background:#ffff00;"></div>
<span class="t" style="left:179.19px;top:376.00px;font-size:14.2px;line-height:18px;color:#fff;">1</span>
<span class="t" style="left:213.14px;top:377.00px;font-size:13.2px;line-height:17px;letter-spacing:0.106px;color:#000;">Capacidade de decisão</span>
<span class="t" style="left:414.14px;top:376.00px;font-size:14.2px;line-height:18px;letter-spacing:0.380px;color:#000;">20</span>
<div class="b" style="left:155.00px;top:395.00px;width:55.00px;height:19.00px;background:#1f497d;"></div>
<div class="b" style="left:211.00px;top:395.00px;width:182.00px;height:19.00px;background:#dce6f1;"></div>
<div class="b" style="left:394.00px;top:395.00px;width:56.00px;height:19.00px;background:#ffff00;"></div>
<span class="t" style="left:179.37px;top:396.00px;font-size:14.2px;line-height:18px;color:#fff;">2</span>
<span class="t" style="left:213.14px;top:397.00px;font-size:13.2px;line-height:17px;letter-spacing:0.215px;color:#000;">Confiança em si</span>
<span class="t" style="left:414.32px;top:396.00px;font-size:14.2px;line-height:18px;letter-spacing:0.203px;color:#000;">30</span>
<div class="b" style="left:155.00px;top:415.00px;width:55.00px;height:19.00px;background:#1f497d;"></div>
<div class="b" style="left:211.00px;top:415.00px;width:182.00px;height:19.00px;background:#dce6f1;"></div>
<div class="b" style="left:394.00px;top:415.00px;width:56.00px;height:19.00px;background:#ffff00;"></div>
<span class="t" style="left:179.43px;top:416.00px;font-size:14.2px;line-height:18px;color:#fff;">3</span>
<span class="t" style="left:213.80px;top:417.00px;font-size:13.2px;line-height:17px;letter-spacing:0.593px;color:#000;">Autoestima</span>
<span class="t" style="left:414.28px;top:416.00px;font-size:14.2px;line-height:18px;letter-spacing:0.238px;color:#000;">50</span>
<div class="b" style="left:155.00px;top:435.00px;width:55.00px;height:19.00px;background:#1f497d;"></div>
<div class="b" style="left:211.00px;top:435.00px;width:182.00px;height:19.00px;background:#dce6f1;"></div>
<div class="b" style="left:394.00px;top:435.00px;width:56.00px;height:19.00px;background:#ffff00;"></div>
<span class="t" style="left:179.44px;top:436.00px;font-size:14.2px;line-height:18px;color:#fff;">4</span>
<span class="t" style="left:212.74px;top:437.00px;font-size:13.2px;line-height:17px;letter-spacing:0.252px;color:#000;">Empatia</span>
<span class="t" style="left:413.79px;top:436.00px;font-size:14.2px;line-height:18px;letter-spacing:0.735px;color:#000;">10</span>
<div class="b" style="left:155.00px;top:455.00px;width:55.00px;height:19.00px;background:#1f497d;"></div>
<div class="b" style="left:211.00px;top:455.00px;width:182.00px;height:19.00px;background:#dce6f1;"></div>
<div class="b" style="left:394.00px;top:455.00px;width:56.00px;height:19.00px;background:#ffff00;"></div>
<span class="t" style="left:179.39px;top:456.00px;font-size:14.2px;line-height:18px;color:#fff;">5</span>
<span class="t" style="left:213.14px;top:457.00px;font-size:13.2px;line-height:17px;letter-spacing:0.160px;color:#000;">Comunicação</span>
<span class="t" style="left:414.14px;top:456.00px;font-size:14.2px;line-height:18px;letter-spacing:0.380px;color:#000;">20</span>
<div class="b" style="left:155.00px;top:475.00px;width:55.00px;height:19.00px;background:#1f497d;"></div>
<div class="b" style="left:211.00px;top:475.00px;width:182.00px;height:19.00px;background:#dce6f1;"></div>
<div class="b" style="left:394.00px;top:475.00px;width:56.00px;height:19.00px;background:#ffff00;"></div>
<span class="t" style="left:179.34px;top:476.00px;font-size:14.2px;line-height:18px;color:#fff;">6</span>
<span class="t" style="left:213.80px;top:477.00px;font-size:13.2px;line-height:17px;letter-spacing:0.212px;color:#000;">Análise de dados</span>
<span class="t" style="left:414.21px;top:476.00px;font-size:14.2px;line-height:18px;letter-spacing:0.309px;color:#000;">90</span>
<div class="b" style="left:155.00px;top:495.00px;width:55.00px;height:19.00px;background:#1f497d;"></div>
<div class="b" style="left:211.00px;top:495.00px;width:182.00px;height:19.00px;background:#dce6f1;"></div>
<div class="b" style="left:394.00px;top:495.00px;width:56.00px;height:19.00px;background:#ffff00;"></div>
<span class="t" style="left:179.37px;top:496.00px;font-size:14.2px;line-height:18px;color:#fff;">7</span>
<span class="t" style="left:212.74px;top:497.00px;font-size:13.2px;line-height:17px;letter-spacing:0.462px;color:#000;">Planejamento estratégico</span>
<span class="t" style="left:414.28px;top:496.00px;font-size:14.2px;line-height:18px;letter-spacing:0.238px;color:#000;">50</span>
<div class="b" style="left:155.00px;top:515.00px;width:55.00px;height:19.00px;background:#1f497d;"></div>
<div class="b" style="left:211.00px;top:515.00px;width:182.00px;height:19.00px;background:#dce6f1;"></div>
<div class="b" style="left:394.00px;top:515.00px;width:56.00px;height:19.00px;background:#ffff00;"></div>
<span class="t" style="left:179.38px;top:516.00px;font-size:14.2px;line-height:18px;color:#fff;">8</span>
<span class="t" style="left:212.74px;top:517.00px;font-size:13.2px;line-height:17px;letter-spacing:0.023px;color:#000;">Persuasão</span>
<span class="t" style="left:414.25px;top:516.00px;font-size:14.2px;line-height:18px;letter-spacing:0.274px;color:#000;">80</span>
<div class="b" style="left:155.00px;top:535.00px;width:55.00px;height:19.00px;background:#1f497d;"></div>
<div class="b" style="left:211.00px;top:535.00px;width:182.00px;height:19.00px;background:#dce6f1;"></div>
<div class="b" style="left:394.00px;top:535.00px;width:56.00px;height:19.00px;background:#ffff00;"></div>
<span class="t" style="left:179.39px;top:536.00px;font-size:14.2px;line-height:18px;color:#fff;">9</span>
<span class="t" style="left:212.61px;top:537.00px;font-size:13.2px;line-height:17px;letter-spacing:0.662px;color:#000;">Influência</span>
<span class="t" style="left:414.14px;top:536.00px;font-size:14.2px;line-height:18px;letter-spacing:0.380px;color:#000;">60</span>
<div class="b" style="left:155.00px;top:555.00px;width:55.00px;height:19.00px;background:#1f497d;"></div>
<div class="b" style="left:211.00px;top:555.00px;width:182.00px;height:19.00px;background:#dce6f1;"></div>
<div class="b" style="left:394.00px;top:555.00px;width:56.00px;height:19.00px;background:#ffff00;"></div>
<span class="t" style="left:175.34px;top:556.00px;font-size:14.2px;line-height:18px;letter-spacing:-0.567px;color:#fff;">10</span>
<span class="t" style="left:213.14px;top:557.00px;font-size:13.2px;line-height:17px;letter-spacing:0.464px;color:#000;">Gerenciamento de conflitos</span>
<span class="t" style="left:414.14px;top:556.00px;font-size:14.2px;line-height:18px;letter-spacing:0.380px;color:#000;">70</span>
<div class="b" style="left:155.00px;top:575.00px;width:55.00px;height:19.00px;background:#1f497d;"></div>
<div class="b" style="left:211.00px;top:575.00px;width:182.00px;height:19.00px;background:#dce6f1;"></div>
<div class="b" style="left:394.00px;top:575.00px;width:56.00px;height:19.00px;background:#ffff00;"></div>
<span class="t" style="left:175.90px;top:576.00px;font-size:14.2px;line-height:18px;letter-spacing:-0.520px;color:#fff;">11</span>
<span class="t" style="left:212.74px;top:577.00px;font-size:13.2px;line-height:17px;letter-spacing:0.199px;color:#000;">Fazer Coaching Informal</span>
<span class="t" style="left:414.28px;top:576.00px;font-size:14.2px;line-height:18px;letter-spacing:0.238px;color:#000;">50</span>
<div class="b" style="left:155.00px;top:595.00px;width:55.00px;height:19.00px;background:#1f497d;"></div>
<div class="b" style="left:211.00px;top:595.00px;width:182.00px;height:19.00px;background:#dce6f1;"></div>
<div class="b" style="left:394.00px;top:595.00px;width:56.00px;height:19.00px;background:#ffff00;"></div>
<span class="t" style="left:175.40px;top:596.00px;font-size:14.2px;line-height:18px;letter-spacing:-0.561px;color:#fff;">12</span>
<span class="t" style="left:213.14px;top:597.00px;font-size:13.2px;line-height:17px;letter-spacing:0.489px;color:#000;">Gerenciamento de tempo</span>
<span class="t" style="left:414.32px;top:596.00px;font-size:14.2px;line-height:18px;letter-spacing:0.203px;color:#000;">30</span>
<div class="b" style="left:155.00px;top:615.00px;width:55.00px;height:20.00px;background:#1f497d;"></div>
<div class="b" style="left:211.00px;top:615.00px;width:182.00px;height:20.00px;background:#dce6f1;"></div>
<div class="b" style="left:394.00px;top:615.00px;width:56.00px;height:20.00px;background:#ffff00;"></div>
<span class="t" style="left:175.37px;top:616.00px;font-size:14.2px;line-height:18px;letter-spacing:-0.564px;color:#fff;">13</span>
<span class="t" style="left:212.74px;top:617.00px;font-size:13.2px;line-height:17px;letter-spacing:0.420px;color:#000;">Delegar</span>
<span class="t" style="left:414.25px;top:616.00px;font-size:14.2px;line-height:18px;letter-spacing:0.274px;color:#000;">80</span>
<div class="b" style="left:155.00px;top:636.00px;width:55.00px;height:20.00px;background:#1f497d;"></div>
<div class="b" style="left:211.00px;top:636.00px;width:182.00px;height:20.00px;background:#dce6f1;"></div>
<div class="b" style="left:394.00px;top:636.00px;width:56.00px;height:20.00px;background:#ffff00;"></div>
<span class="t" style="left:175.27px;top:638.00px;font-size:14.2px;line-height:18px;letter-spacing:-0.572px;color:#fff;">14</span>
<span class="t" style="left:213.14px;top:639.00px;font-size:13.2px;line-height:17px;letter-spacing:0.268px;color:#000;">Criar e gerenciar times</span>
<span class="t" style="left:414.21px;top:638.00px;font-size:14.2px;line-height:18px;letter-spacing:0.309px;color:#000;">90</span>
<div class="b" style="left:155.00px;top:657.00px;width:55.00px;height:20.00px;background:#1f497d;"></div>
<div class="b" style="left:211.00px;top:657.00px;width:182.00px;height:20.00px;background:#dce6f1;"></div>
<div class="b" style="left:394.00px;top:657.00px;width:56.00px;height:20.00px;background:#ffff00;"></div>
<span class="t" style="left:175.35px;top:659.00px;font-size:14.2px;line-height:18px;letter-spacing:-0.565px;color:#fff;">15</span>
<span class="t" style="left:212.74px;top:660.00px;font-size:13.2px;line-height:17px;letter-spacing:0.247px;color:#000;">Resolução de problemas</span>
<span class="t" style="left:414.53px;top:659.00px;font-size:14.2px;line-height:18px;letter-spacing:-0.010px;color:#000;">40</span>
<div class="b" style="left:155.00px;top:678.00px;width:55.00px;height:19.00px;background:#1f497d;"></div>
<div class="b" style="left:211.00px;top:678.00px;width:182.00px;height:19.00px;background:#dce6f1;"></div>
<div class="b" style="left:394.00px;top:678.00px;width:56.00px;height:19.00px;background:#ffff00;"></div>
<span class="t" style="left:175.37px;top:680.00px;font-size:14.2px;line-height:18px;letter-spacing:-0.564px;color:#fff;">16</span>
<span class="t" style="left:212.74px;top:681.00px;font-size:13.2px;line-height:17px;letter-spacing:0.210px;color:#000;">Negociação</span>
<span class="t" style="left:414.25px;top:680.00px;font-size:14.2px;line-height:18px;letter-spacing:0.274px;color:#000;">80</span>
<div class="b" style="left:156.00px;top:727.00px;width:294.00px;height:82.00px;background:#fff;border:1px solid #c9c9c9;box-sizing:border-box;"></div>
<span class="t" style="left:208.22px;top:734.00px;font-size:13.6px;line-height:17px;letter-spacing:0.259px;font-weight:700;color:#1f497d;">Digite no campo amarelo de</span>
<span class="t" style="left:177.49px;top:754.00px;font-size:13.6px;line-height:17px;letter-spacing:0.143px;font-weight:700;color:#1f497d;">0 a 100 sua avaliação de competência</span>
<span class="t" style="left:222.92px;top:773.00px;font-size:13.6px;line-height:17px;letter-spacing:0.192px;font-weight:700;color:#1f497d;">nas determinadas áreas</span>
<svg class="b" style="left:0;top:0;font-family:'Liberation Sans',sans-serif;" width="1557" height="960" viewBox="0 0 1557 960" fill="#000"><rect x="543.5" y="232.5" width="577" height="519" fill="#fff" stroke="#868686" stroke-width="1"/>
<polygon points="835.50,491.20 843.61,492.81 850.49,497.41 855.09,504.29 856.70,512.40 855.09,520.51 850.49,527.39 843.61,531.99 835.50,533.60 827.39,531.99 820.51,527.39 815.91,520.51 814.30,512.40 815.91,504.29 820.51,497.41 827.39,492.81" fill="none" stroke="#868686" stroke-width="1.25"/>
<polygon points="835.50,470.00 851.73,473.23 865.48,482.42 874.67,496.17 877.90,512.40 874.67,528.63 865.48,542.38 851.73,551.57 835.50,554.80 819.27,551.57 805.52,542.38 796.33,528.63 793.10,512.40 796.33,496.17 805.52,482.42 819.27,473.23" fill="none" stroke="#868686" stroke-width="1.25"/>
<polygon points="835.50,448.80 859.84,453.64 880.47,467.43 894.26,488.06 899.10,512.40 894.26,536.74 880.47,557.37 859.84,571.16 835.50,576.00 811.16,571.16 790.53,557.37 776.74,536.74 771.90,512.40 776.74,488.06 790.53,467.43 811.16,453.64" fill="none" stroke="#868686" stroke-width="1.25"/>
<polygon points="835.50,427.60 867.95,434.06 895.46,452.44 913.84,479.95 920.30,512.40 913.84,544.85 895.46,572.36 867.95,590.74 835.50,597.20 803.05,590.74 775.54,572.36 757.16,544.85 750.70,512.40 757.16,479.95 775.54,452.44 803.05,434.06" fill="none" stroke="#868686" stroke-width="1.25"/>
<polygon points="835.50,406.40 876.06,414.47 910.45,437.45 933.43,471.84 941.50,512.40 933.43,552.96 910.45,587.35 876.06,610.33 835.50,618.40 794.94,610.33 760.55,587.35 737.57,552.96 729.50,512.40 737.57,471.84 760.55,437.45 794.94,414.47" fill="none" stroke="#868686" stroke-width="1.25"/>
<polygon points="835.50,385.20 884.18,394.88 925.44,422.46 953.02,463.72 962.70,512.40 953.02,561.08 925.44,602.34 884.18,629.92 835.50,639.60 786.82,629.92 745.56,602.34 717.98,561.08 708.30,512.40 717.98,463.72 745.56,422.46 786.82,394.88" fill="none" stroke="#868686" stroke-width="1.25"/>
<polygon points="835.50,364.00 892.29,375.30 940.43,407.47 972.60,455.61 983.90,512.40 972.60,569.19 940.43,617.33 892.29,649.50 835.50,660.80 778.71,649.50 730.57,617.33 698.40,569.19 687.10,512.40 698.40,455.61 730.57,407.47 778.71,375.30" fill="none" stroke="#868686" stroke-width="1.25"/>
<polygon points="835.50,342.80 900.40,355.71 955.43,392.47 992.19,447.50 1005.10,512.40 992.19,577.30 955.43,632.33 900.40,669.09 835.50,682.00 770.60,669.09 715.57,632.33 678.81,577.30 665.90,512.40 678.81,447.50 715.57,392.47 770.60,355.71" fill="none" stroke="#868686" stroke-width="1.25"/>
<polygon points="835.50,321.60 908.52,336.12 970.42,377.48 1011.78,439.38 1026.30,512.40 1011.78,585.42 970.42,647.32 908.52,688.68 835.50,703.20 762.48,688.68 700.58,647.32 659.22,585.42 644.70,512.40 659.22,439.38 700.58,377.48 762.48,336.12" fill="none" stroke="#868686" stroke-width="1.25"/>
<polygon points="835.50,300.40 916.63,316.54 985.41,362.49 1031.36,431.27 1047.50,512.40 1031.36,593.53 985.41,662.31 916.63,708.26 835.50,724.40 754.37,708.26 685.59,662.31 639.64,593.53 623.50,512.40 639.64,431.27 685.59,362.49 754.37,316.54" fill="none" stroke="#868686" stroke-width="1.25"/>
<polygon points="835.50,470.00 859.84,453.64 910.45,437.45 855.09,504.29 877.90,512.40 1011.78,585.42 910.45,587.35 900.40,669.09 835.50,639.60 778.71,649.50 760.55,587.35 776.74,536.74 665.90,512.40 659.22,439.38 775.54,452.44 770.60,355.71" fill="#4198af"/>
<line x1="835.5" y1="512.4" x2="835.50" y2="300.40" stroke="#8a8a8a" stroke-width="1.25"/>
<line x1="835.5" y1="512.4" x2="916.63" y2="316.54" stroke="#8a8a8a" stroke-width="1.25"/>
<line x1="835.5" y1="512.4" x2="985.41" y2="362.49" stroke="#8a8a8a" stroke-width="1.25"/>
<line x1="835.5" y1="512.4" x2="1031.36" y2="431.27" stroke="#8a8a8a" stroke-width="1.25"/>
<line x1="835.5" y1="512.4" x2="1047.50" y2="512.40" stroke="#8a8a8a" stroke-width="1.25"/>
<line x1="835.5" y1="512.4" x2="1031.36" y2="593.53" stroke="#8a8a8a" stroke-width="1.25"/>
<line x1="835.5" y1="512.4" x2="985.41" y2="662.31" stroke="#8a8a8a" stroke-width="1.25"/>
<line x1="835.5" y1="512.4" x2="916.63" y2="708.26" stroke="#8a8a8a" stroke-width="1.25"/>
<line x1="835.5" y1="512.4" x2="835.50" y2="724.40" stroke="#8a8a8a" stroke-width="1.25"/>
<line x1="835.5" y1="512.4" x2="754.37" y2="708.26" stroke="#8a8a8a" stroke-width="1.25"/>
<line x1="835.5" y1="512.4" x2="685.59" y2="662.31" stroke="#8a8a8a" stroke-width="1.25"/>
<line x1="835.5" y1="512.4" x2="639.64" y2="593.53" stroke="#8a8a8a" stroke-width="1.25"/>
<line x1="835.5" y1="512.4" x2="623.50" y2="512.40" stroke="#8a8a8a" stroke-width="1.25"/>
<line x1="835.5" y1="512.4" x2="639.64" y2="431.27" stroke="#8a8a8a" stroke-width="1.25"/>
<line x1="835.5" y1="512.4" x2="685.59" y2="362.49" stroke="#8a8a8a" stroke-width="1.25"/>
<line x1="835.5" y1="512.4" x2="754.37" y2="316.54" stroke="#8a8a8a" stroke-width="1.25"/>
<circle cx="835.5" cy="512.4" r="2.6" fill="#8a8a8a"/>
<text x="712.87" y="257" style="font-size:20.4px;letter-spacing:0.018px;font-weight:700;">Roda das competências</text>
<text x="815.30" y="517" style="font-size:10.8px;">0</text>
<text x="808.69" y="496" style="font-size:10.8px;letter-spacing:1.000px;">10</text>
<text x="808.96" y="475" style="font-size:10.8px;letter-spacing:1.000px;">20</text>
<text x="809.10" y="454" style="font-size:10.8px;letter-spacing:1.000px;">30</text>
<text x="809.26" y="433" style="font-size:10.8px;letter-spacing:0.860px;">40</text>
<text x="809.07" y="412" style="font-size:10.8px;letter-spacing:1.000px;">50</text>
<text x="808.96" y="390" style="font-size:10.8px;letter-spacing:1.000px;">60</text>
<text x="808.96" y="369" style="font-size:10.8px;letter-spacing:1.000px;">70</text>
<text x="809.04" y="348" style="font-size:10.8px;letter-spacing:1.000px;">80</text>
<text x="809.01" y="327" style="font-size:10.8px;letter-spacing:1.000px;">90</text>
<text x="802.39" y="306" style="font-size:10.8px;letter-spacing:0.853px;">100</text>
<text x="832.84" y="287" style="font-size:10.8px;">1</text>
<text x="920.41" y="313" style="font-size:10.8px;">2</text>
<text x="991.45" y="361" style="font-size:10.8px;">3</text>
<text x="1039.31" y="432" style="font-size:10.8px;">4</text>
<text x="1056.22" y="517" style="font-size:10.8px;">5</text>
<text x="1039.31" y="601" style="font-size:10.8px;">6</text>
<text x="991.51" y="672" style="font-size:10.8px;">7</text>
<text x="919.69" y="720" style="font-size:10.8px;">8</text>
<text x="832.36" y="746" style="font-size:10.8px;">9</text>
<text x="737.74" y="720" style="font-size:10.8px;letter-spacing:1.000px;">10</text>
<text x="666.54" y="672" style="font-size:10.8px;letter-spacing:1.000px;">11</text>
<text x="618.74" y="601" style="font-size:10.8px;letter-spacing:1.000px;">12</text>
<text x="602.04" y="517" style="font-size:10.8px;letter-spacing:0.781px;">13</text>
<text x="618.94" y="432" style="font-size:10.8px;letter-spacing:1.000px;">14</text>
<text x="666.44" y="361" style="font-size:10.8px;letter-spacing:1.000px;">15</text>
<text x="738.14" y="313" style="font-size:10.8px;letter-spacing:1.000px;">16</text>
<rect x="851.5" y="263.5" width="152.0" height="26.0" fill="#fff" stroke="#bdbdbd" stroke-width="1"/>
<text x="860.20" y="281" style="font-size:12px;letter-spacing:0.243px;">Capacidade de decisão</text>
<rect x="938.5" y="297.5" width="110.0" height="24.0" fill="#fff" stroke="#bdbdbd" stroke-width="1"/>
<text x="947.30" y="315" style="font-size:12px;letter-spacing:0.298px;">Confiança em si</text>
<rect x="1009.5" y="349.5" width="86.0" height="24.0" fill="#fff" stroke="#bdbdbd" stroke-width="1"/>
<text x="1018.80" y="367" style="font-size:12px;letter-spacing:0.571px;">Autoestima</text>
<rect x="1052.5" y="414.5" width="71.0" height="24.0" fill="#fff" stroke="#bdbdbd" stroke-width="1"/>
<text x="1061.04" y="432" style="font-size:12px;letter-spacing:0.453px;">Empatia</text>
<rect x="1067.5" y="498.5" width="96.0" height="26.0" fill="#fff" stroke="#bdbdbd" stroke-width="1"/>
<text x="1076.10" y="516" style="font-size:12px;letter-spacing:0.383px;">Comunicação</text>
<rect x="1054.5" y="588.5" width="123.0" height="26.0" fill="#fff" stroke="#bdbdbd" stroke-width="1"/>
<text x="1064.20" y="606" style="font-size:12px;letter-spacing:0.223px;">Análise de dados</text>
<rect x="1017.5" y="665.5" width="169.0" height="28.0" fill="#fff" stroke="#bdbdbd" stroke-width="1"/>
<text x="1026.04" y="683" style="font-size:12px;letter-spacing:0.479px;">Planejamento estratégico</text>
<rect x="933.5" y="730.5" width="85.0" height="24.0" fill="#fff" stroke="#bdbdbd" stroke-width="1"/>
<text x="942.34" y="748" style="font-size:12px;letter-spacing:0.160px;">Persuasão</text>
<rect x="794.5" y="753.5" width="80.0" height="25.0" fill="#fff" stroke="#bdbdbd" stroke-width="1"/>
<text x="802.92" y="771" style="font-size:12px;letter-spacing:0.510px;">Influência</text>
<rect x="580.5" y="715.5" width="151.0" height="49.0" fill="#fff" stroke="#bdbdbd" stroke-width="1"/>
<text x="602.40" y="735" style="font-size:12px;letter-spacing:0.494px;">Gerenciamento de</text>
<text x="630.69" y="752" style="font-size:12px;letter-spacing:0.652px;">conflitos</text>
<rect x="497.5" y="661.5" width="163.0" height="24.0" fill="#fff" stroke="#bdbdbd" stroke-width="1"/>
<text x="506.04" y="679" style="font-size:12px;letter-spacing:0.297px;">Fazer Coaching Informal</text>
<rect x="500.5" y="581.5" width="112.0" height="45.0" fill="#fff" stroke="#bdbdbd" stroke-width="1"/>
<text x="511.40" y="599" style="font-size:12px;letter-spacing:0.547px;">Gerencimaneto</text>
<text x="528.32" y="616" style="font-size:12px;letter-spacing:0.779px;">de tempo</text>
<rect x="520.5" y="500.5" width="71.0" height="24.0" fill="#fff" stroke="#bdbdbd" stroke-width="1"/>
<text x="529.34" y="518" style="font-size:12px;letter-spacing:0.302px;">Delegar</text>
<rect x="499.5" y="405.5" width="112.0" height="49.0" fill="#fff" stroke="#bdbdbd" stroke-width="1"/>
<text x="535.90" y="423" style="font-size:12px;letter-spacing:0.268px;">Criar e</text>
<text x="510.52" y="440" style="font-size:12px;letter-spacing:0.477px;">gerenciar times</text>
<rect x="544.5" y="327.5" width="110.0" height="49.0" fill="#fff" stroke="#bdbdbd" stroke-width="1"/>
<text x="560.74" y="347" style="font-size:12px;letter-spacing:0.254px;">Resolução de</text>
<text x="568.65" y="364" style="font-size:12px;letter-spacing:0.604px;">problemas</text>
<rect x="653.5" y="280.5" width="87.0" height="26.0" fill="#fff" stroke="#bdbdbd" stroke-width="1"/>
<text x="662.04" y="298" style="font-size:12px;letter-spacing:0.376px;">Negociação</text></svg>
<div class="b" style="left:0.00px;top:929.00px;width:1557.00px;height:31.00px;background:#f0f0f0;"></div>
<div class="b" style="left:0.00px;top:929.00px;width:1557.00px;height:1.00px;background:#dcdcdc;"></div>
<div class="b" style="left:113.00px;top:929.00px;width:218.40px;height:28.00px;background:#fff;border-radius:0 0 5px 5px;box-shadow:0 0 1.5px rgba(0,0,0,0.25);"></div>
<span class="t" style="left:121.81px;top:934.00px;font-size:13.7px;line-height:17px;letter-spacing:0.024px;font-weight:700;color:#1a1a1a;">Início &gt; Roda das competência</span>
<div class="b" style="left:122.00px;top:952.00px;width:201.50px;height:2.20px;background:#107c41;border-radius:1px;"></div>
<svg class="b" style="left:25.70px;top:939.80px;" width="7" height="9.6" viewBox="0 0 7 9.6"><path d="M6.5 0.5 L0.7 4.8 L6.5 9.1" fill="none" stroke="#a6a6a6" stroke-width="1.1"/></svg>
<svg class="b" style="left:57.80px;top:939.80px;" width="7" height="9.6" viewBox="0 0 7 9.6"><path d="M0.5 0.5 L6.3 4.8 L0.5 9.1" fill="none" stroke="#a6a6a6" stroke-width="1.1"/></svg>
<div class="b" style="left:335.50px;top:936.50px;width:1.00px;height:16.50px;background:#cfcfcf;"></div>
<span class="t" style="left:353.50px;top:937.00px;font-size:13.7px;line-height:17px;letter-spacing:0.018px;color:#2b2b2b;">Final &gt; Roda das competências</span>
<div class="b" style="left:563.00px;top:936.50px;width:1.00px;height:16.50px;background:#cfcfcf;"></div>
<svg class="b" style="left:606.20px;top:939.30px;" width="10.8" height="10.8" viewBox="0 0 10.8 10.8"><path d="M5.4 0 V10.8 M0 5.4 H10.8" fill="none" stroke="#333" stroke-width="1.1"/></svg>
<div class="b" style="left:1151.20px;top:939.80px;width:1.60px;height:1.60px;background:#8c8c8c;"></div>
<div class="b" style="left:1151.20px;top:943.80px;width:1.60px;height:1.60px;background:#8c8c8c;"></div>
<div class="b" style="left:1151.20px;top:947.80px;width:1.60px;height:1.60px;background:#8c8c8c;"></div>
<div class="b" style="left:1168.00px;top:937.50px;width:432.00px;height:16.00px;background:#f7f7f7;border-radius:8px;"></div>
<svg class="b" style="left:1172.80px;top:941.00px;" width="7" height="9" viewBox="0 0 7 9"><path d="M7 0 V9 L0 4.5 Z" fill="#666"/></svg>
<div class="b" style="left:1185.00px;top:941.00px;width:415.00px;height:9.00px;background:#707070;border-radius:4.5px;"></div>
</body></html>
